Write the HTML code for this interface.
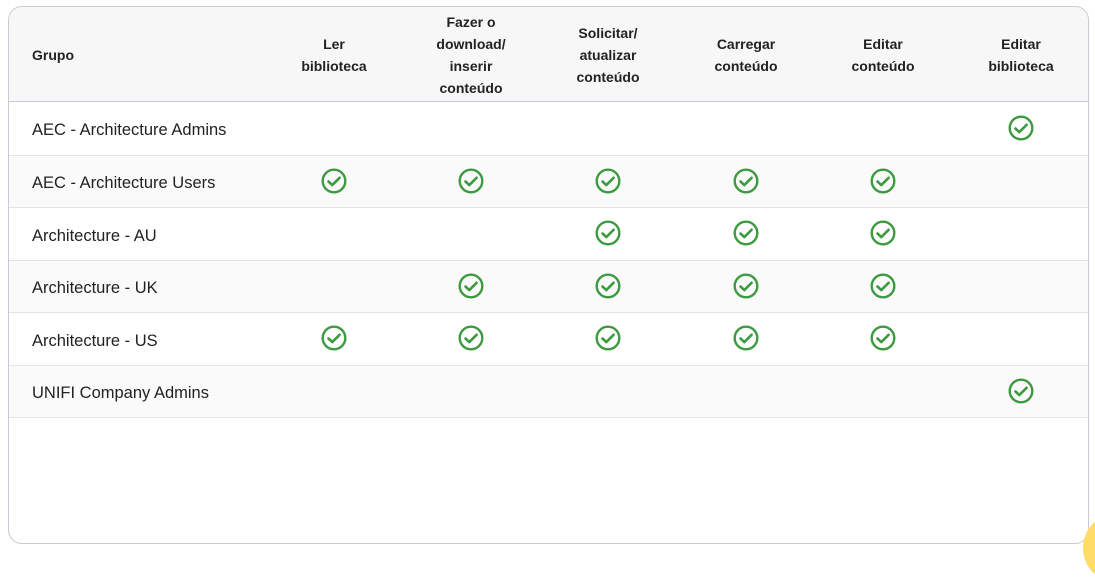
<!DOCTYPE html><html><head><style>
body{margin:0;width:1095px;height:550px;background:#fff;font-family:"Liberation Sans",sans-serif;position:relative;overflow:hidden}
.box{position:absolute;left:8px;top:6px;width:1079px;height:536px;border:1px solid #c9c9d3;border-radius:14px;overflow:hidden;background:#fff}
.hd{position:absolute;left:0;top:0;width:100%;height:94px;background:#f7f7f7;border-bottom:1px solid #c9ccd6}
.hc{position:absolute;top:1px;height:94px;display:flex;align-items:center;justify-content:center;text-align:center;font-weight:bold;font-size:14px;line-height:22px;color:#222;width:120px;margin-left:-60px}
.row{position:absolute;left:0;width:100%;border-bottom:1px solid #e3e3ea;font-size:16.5px;color:#222;display:flex;align-items:center}
.row span{position:absolute;left:23px;margin-top:4px}
.row.g{background:#fafafb}
.ck{position:absolute;top:50%;width:26px;height:26px;margin-left:-13px;margin-top:-14px}
.yel{position:absolute;left:1083px;top:513px;width:70px;height:70px;border-radius:50%;background:#ffdc66}
</style></head><body>
<div class="box">
<div class="hd">
<div class="hc" style="margin-left:0;width:auto;left:23px;justify-content:flex-start">Grupo</div>
<div class="hc" style="left:325px">Ler<br>biblioteca</div>
<div class="hc" style="left:462px">Fazer o<br>download/<br>inserir<br>conteúdo</div>
<div class="hc" style="left:599px">Solicitar/<br>atualizar<br>conteúdo</div>
<div class="hc" style="left:737px">Carregar<br>conteúdo</div>
<div class="hc" style="left:874px">Editar<br>conteúdo</div>
<div class="hc" style="left:1012px">Editar<br>biblioteca</div>
</div>
<svg width="0" height="0" style="position:absolute"><defs><symbol id="c" viewBox="0 0 26 26"><circle cx="13" cy="13" r="11.3" fill="none" stroke="#3d9a40" stroke-width="2.4"/><path d="M7.5 13.5l3.8 3.6 7.3-7.3" fill="none" stroke="#3d9a40" stroke-width="2.6" stroke-linecap="round" stroke-linejoin="round"/></symbol></defs></svg>
<div class="row" style="top:95px;height:53px"><span>AEC - Architecture Admins</span><svg class="ck" style="left:1012px"><use href="#c"/></svg></div>
<div class="row g" style="top:149px;height:51px"><span>AEC - Architecture Users</span><svg class="ck" style="left:325px"><use href="#c"/></svg><svg class="ck" style="left:462px"><use href="#c"/></svg><svg class="ck" style="left:599px"><use href="#c"/></svg><svg class="ck" style="left:737px"><use href="#c"/></svg><svg class="ck" style="left:874px"><use href="#c"/></svg></div>
<div class="row" style="top:201px;height:52px"><span>Architecture - AU</span><svg class="ck" style="left:599px"><use href="#c"/></svg><svg class="ck" style="left:737px"><use href="#c"/></svg><svg class="ck" style="left:874px"><use href="#c"/></svg></div>
<div class="row g" style="top:254px;height:51px"><span>Architecture - UK</span><svg class="ck" style="left:462px"><use href="#c"/></svg><svg class="ck" style="left:599px"><use href="#c"/></svg><svg class="ck" style="left:737px"><use href="#c"/></svg><svg class="ck" style="left:874px"><use href="#c"/></svg></div>
<div class="row" style="top:306px;height:52px"><span>Architecture - US</span><svg class="ck" style="left:325px"><use href="#c"/></svg><svg class="ck" style="left:462px"><use href="#c"/></svg><svg class="ck" style="left:599px"><use href="#c"/></svg><svg class="ck" style="left:737px"><use href="#c"/></svg><svg class="ck" style="left:874px"><use href="#c"/></svg></div>
<div class="row g" style="top:359px;height:51px"><span>UNIFI Company Admins</span><svg class="ck" style="left:1012px"><use href="#c"/></svg></div>
</div>
<div class="yel"></div>
</body></html>
